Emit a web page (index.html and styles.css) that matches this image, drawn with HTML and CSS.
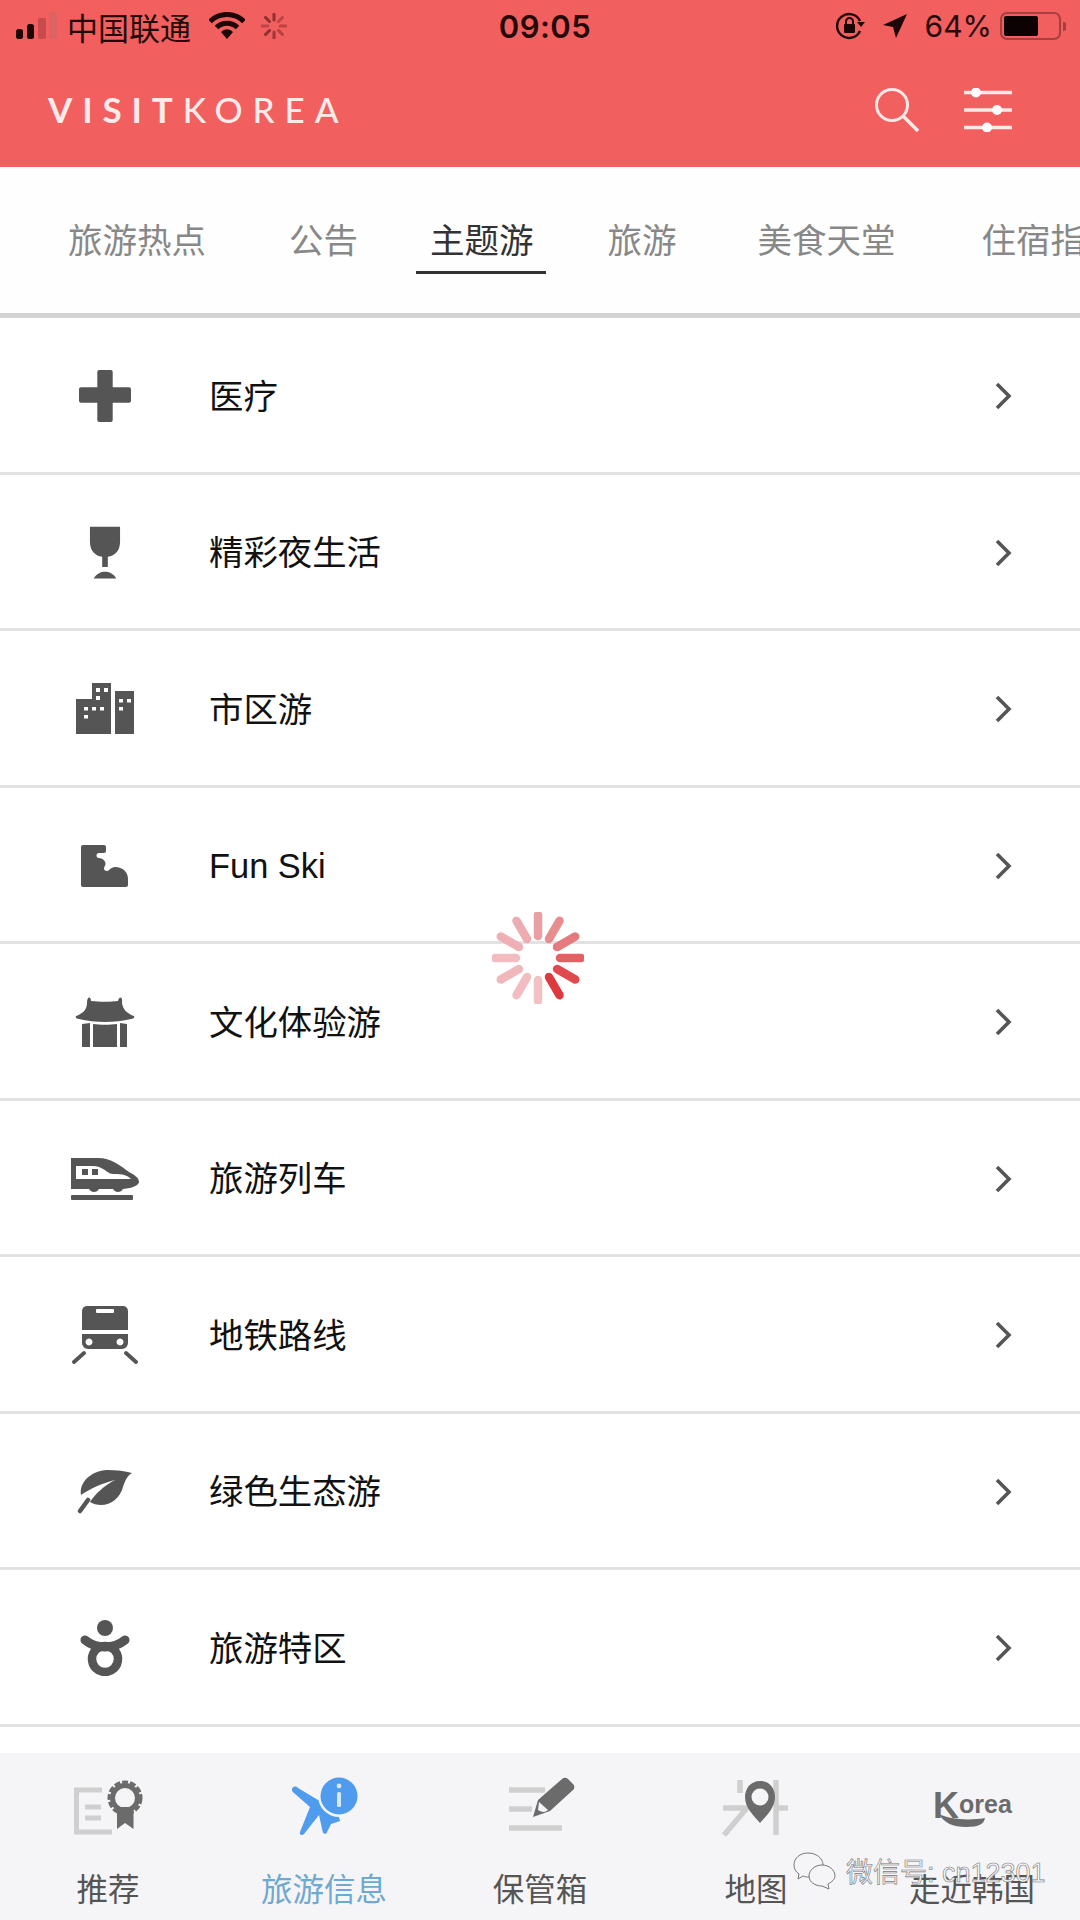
FILE: index.html
```html
<!DOCTYPE html>
<html lang="zh-CN">
<head>
    <meta charset="UTF-8">
    <meta name="viewport" content="width=device-width, initial-scale=1.0">
    <title>VISITKOREA</title>
    <link rel="stylesheet" href="styles.css">
</head>
<body>
<div class="app">

    <header class="top">
        <div class="status">
            <div class="status-left">
                <svg class="ic-signal" width="44" height="28" viewBox="0 0 44 28">
                    <rect x="0" y="17" width="7" height="10" rx="2.5" fill="#1c0606"/>
                    <rect x="11" y="12" width="7" height="15" rx="2.5" fill="#1c0606"/>
                    <rect x="22" y="6" width="8" height="21" rx="2" fill="#c94a4a"/>
                    <rect x="33" y="0" width="8" height="27" rx="2" fill="#dd6262"/>
                </svg>
                <span class="carrier">中国联通</span>
                <svg class="ic-wifi" width="36" height="28" viewBox="0 0 36 28">
                    <path d="M1 9.5 A24 24 0 0 1 35 9.5" fill="none" stroke="#1c0606" stroke-width="5"/>
                    <path d="M7.5 15.5 A15 15 0 0 1 28.500 15.5" fill="none" stroke="#1c0606" stroke-width="5"/>
                    <path d="M12 20 A8 8 0 0 1 24 20 L18 27Z" fill="#1c0606"/>
                </svg>
                <svg class="ic-load" width="26" height="26" viewBox="-13 -13 26 26">
                    <g stroke="#8c2c2c" stroke-width="3" stroke-linecap="round">
                        <path d="M0 -12V-6" opacity=".95"/>
                        <path d="M0 12V6" opacity=".8"/>
                        <path d="M-12 0H-6" opacity=".5"/>
                        <path d="M12 0H6" opacity=".5"/>
                        <path d="M-8.500 -8.500L-4.500 -4.500" opacity=".95"/>
                        <path d="M8.500 8.500L4.500 4.500" opacity=".6"/>
                        <path d="M8.500 -8.500L4.500 -4.500" opacity=".5"/>
                        <path d="M-8.500 8.500L-4.500 4.500" opacity=".95"/>
                    </g>
                </svg>
            </div>
            <div class="time">09:05</div>
            <div class="status-right">
                <svg class="ic-lock" width="30" height="28" viewBox="0 0 30 28">
                    <path d="M24 19 A12 12 0 1 1 24 9" fill="none" stroke="#1c0606" stroke-width="2.400"/>
                    <path d="M21 10 H29 L25 15Z" fill="#1c0606"/>
                    <rect x="8" y="12" width="11" height="9" rx="1" fill="#1c0606"/>
                    <path d="M10 12 V9.500 A3.500 3.500 0 0 1 17 9.500 V12" fill="none" stroke="#1c0606" stroke-width="2"/>
                </svg>
                <svg class="ic-loc" width="26" height="26" viewBox="0 0 26 26">
                    <path d="M25 1 L14 25 L11 14 L1 12Z" fill="#1c0606"/>
                </svg>
                <span class="battery-text">64%</span>
                <div class="battery"><div class="battery-fill"></div></div>
                <div class="battery-tip"></div>
            </div>
        </div>
        <div class="brand-bar">
            <div class="brand"><b>VISIT</b>KOREA</div>
            <div class="brand-tools">
                <svg width="46" height="46" viewBox="0 0 46 46">
                    <circle cx="18" cy="18" r="15.500" fill="none" stroke="#fde8e8" stroke-width="3"/>
                    <path d="M29 29 L44 44" stroke="#fde8e8" stroke-width="3.500"/>
                </svg>
                <svg width="48" height="44" viewBox="0 0 48 44">
                    <g stroke="#fde8e8" stroke-width="3.500">
                        <path d="M0 4.500H48"/>
                        <path d="M0 22H48"/>
                        <path d="M0 39.500H48"/>
                    </g>
                    <g fill="#fff">
                        <circle cx="12" cy="4.500" r="5"/>
                        <circle cx="33" cy="22" r="5"/>
                        <circle cx="23" cy="39.500" r="5"/>
                    </g>
                </svg>
            </div>
        </div>
    </header>

    <nav class="tabs">
        <span class="tab">旅游热点</span>
        <span class="tab">公告</span>
        <span class="tab active">主题游</span>
        <span class="tab">旅游</span>
        <span class="tab">美食天堂</span>
        <span class="tab">住宿指南</span>
    </nav>

    <div class="list">
        <div class="row">
            <div class="row-icon">
                <svg width="52" height="52" viewBox="0 0 54 54"><path d="M19 2 a2 2 0 0 1 2 -2 h12 a2 2 0 0 1 2 2 v16 h17 a2 2 0 0 1 2 2 v12 a2 2 0 0 1 -2 2 h-17 v18 a2 2 0 0 1 -2 2 h-12 a2 2 0 0 1 -2 -2 v-18 h-17 a2 2 0 0 1 -2 -2 v-12 a2 2 0 0 1 2 -2 h17z" fill="#555"/></svg>
            </div>
            <span class="row-label">医疗</span>
            <svg class="chev" width="20" height="28" viewBox="0 0 20 28"><path d="M3 2 L15 14 L3 26" fill="none" stroke="#555" stroke-width="3.600"/></svg>
        </div>
        <div class="row">
            <div class="row-icon">
                <svg width="32" height="54" viewBox="0 0 34 56"><path d="M1 0 H33 V16 C33 26 27 31 20 32 V43 H14 V32 C7 31 1 26 1 16Z" fill="#555"/><path d="M5 55 C8 50 13 48 17 48 C21 48 26 50 29 55Z" fill="#555"/></svg>
            </div>
            <span class="row-label">精彩夜生活</span>
            <svg class="chev" width="20" height="28" viewBox="0 0 20 28"><path d="M3 2 L15 14 L3 26" fill="none" stroke="#555" stroke-width="3.600"/></svg>
        </div>
        <div class="row">
            <div class="row-icon">
                <svg width="58" height="52" viewBox="0 0 58 52">
                    <path d="M0 16 H16 V0 H35 V51 H0Z M39 8 H58 V51 H39Z" fill="#555"/>
                    <g fill="#fff">
                        <rect x="20" y="5" width="4" height="4"/><rect x="28" y="5" width="4" height="4"/><rect x="20" y="13" width="4" height="4"/>
                        <rect x="8" y="24" width="4" height="3.500"/><rect x="16" y="24" width="4" height="3.500"/><rect x="24" y="24" width="4" height="3.500"/><rect x="8" y="32" width="4" height="3.500"/>
                        <rect x="43" y="16" width="4" height="3.500"/><rect x="51" y="16" width="4" height="3.500"/><rect x="43" y="24" width="4" height="3.500"/>
                    </g>
                </svg>
            </div>
            <span class="row-label">市区游</span>
            <svg class="chev" width="20" height="28" viewBox="0 0 20 28"><path d="M3 2 L15 14 L3 26" fill="none" stroke="#555" stroke-width="3.600"/></svg>
        </div>
        <div class="row">
            <div class="row-icon">
                <svg width="47" height="42" viewBox="0 0 47 42"><path d="M2 0 H23 a2 2 0 0 1 2 2 V6 a2 2 0 0 1 -2 2 H18 a2.500 2.500 0 0 0 0 5 C22 13 26 17 24 21 C22 23 23 26 26 26 C28 26 30 22 34 22 C42 22 47 27 47 34 V40 a2 2 0 0 1 -2 2 H2 a2 2 0 0 1 -2 -2 V2 a2 2 0 0 1 2 -2Z" fill="#555"/></svg>
            </div>
            <span class="row-label latin">Fun Ski</span>
            <svg class="chev" width="20" height="28" viewBox="0 0 20 28"><path d="M3 2 L15 14 L3 26" fill="none" stroke="#555" stroke-width="3.600"/></svg>
        </div>
        <div class="row">
            <div class="row-icon">
                <svg width="60" height="52" viewBox="0 0 60 52">
                    <path d="M12 7 C12 0 16 0 16 5 C24 6 36 6 43 5 C44 0 48 0 47 7 C48 14 53 18 59 20 C60 22 58 23 56 23 C40 27 20 27 4 23 C2 23 0 22 1 20 C7 18 12 14 12 7Z" fill="#555"/>
                    <path d="M7 28 L15 27 V51 H7Z M18 28 C25 29 35 29 42 28 V51 H18Z M45 27 L52 28 V51 H45Z" fill="#555"/>
                </svg>
            </div>
            <span class="row-label">文化体验游</span>
            <svg class="chev" width="20" height="28" viewBox="0 0 20 28"><path d="M3 2 L15 14 L3 26" fill="none" stroke="#555" stroke-width="3.600"/></svg>
        </div>
        <div class="row">
            <div class="row-icon">
                <svg width="68" height="42" viewBox="0 0 68 42">
                    <path fill-rule="evenodd" d="M0 0 H27 C40 0 50 8 58 14 C64 17 68 20 68 24 C68 27 62 30 52 31 C50 35 44 35 42 31 H28 C26 35 20 35 18 31 H0Z M5 8 V21 H60 C56 17 52 16 42 16 C38 16 36 13 32 11 C29 9 26 8 22 8Z" fill="#555"/>
                    <rect x="11" y="11" width="6" height="6" fill="#555"/><rect x="21" y="11" width="6" height="6" fill="#555"/>
                    <rect x="0" y="37" width="62" height="5" rx="1" fill="#555"/>
                </svg>
            </div>
            <span class="row-label">旅游列车</span>
            <svg class="chev" width="20" height="28" viewBox="0 0 20 28"><path d="M3 2 L15 14 L3 26" fill="none" stroke="#555" stroke-width="3.600"/></svg>
        </div>
        <div class="row">
            <div class="row-icon">
                <svg width="66" height="58" viewBox="0 0 66 58">
                    <path d="M10 5 a5 5 0 0 1 5 -5 H51 a5 5 0 0 1 5 5 V24 H10Z" fill="#555"/>
                    <rect x="24" y="3" width="18" height="4" rx="1" fill="#fff"/>
                    <path fill-rule="evenodd" d="M10 28 H56 V37 a6 6 0 0 1 -6 6 H16 a6 6 0 0 1 -6 -6Z M17 32.500 a3.500 3.500 0 1 0 .01 0Z M48 32.500 a3.500 3.500 0 1 0 .01 0Z" fill="#555"/>
                    <path d="M12 47 L2 56 M54 47 L64 56" stroke="#555" stroke-width="3.800" stroke-linecap="round"/>
                </svg>
            </div>
            <span class="row-label">地铁路线</span>
            <svg class="chev" width="20" height="28" viewBox="0 0 20 28"><path d="M3 2 L15 14 L3 26" fill="none" stroke="#555" stroke-width="3.600"/></svg>
        </div>
        <div class="row">
            <div class="row-icon">
                <svg width="56" height="44" viewBox="0 0 56 44">
                    <path d="M4 25 C2 12 14 1 30 0 C40 0 48 1 55 3 C51 5 48 10 46 17 C43 28 34 35 24 35 C20 35 16 34 13 32 C18 24 28 15 38 10 C26 13 14 18 4 25Z" fill="#555"/>
                    <path d="M3 41 L11 30" stroke="#555" stroke-width="4.500" stroke-linecap="round"/>
                </svg>
            </div>
            <span class="row-label">绿色生态游</span>
            <svg class="chev" width="20" height="28" viewBox="0 0 20 28"><path d="M3 2 L15 14 L3 26" fill="none" stroke="#555" stroke-width="3.600"/></svg>
        </div>
        <div class="row">
            <div class="row-icon">
                <svg width="52" height="56" viewBox="0 0 52 56">
                    <circle cx="26" cy="8" r="8" fill="#555"/>
                    <path d="M6 20 C12 25 18 27 26 27 C34 27 40 25 46 20" fill="none" stroke="#555" stroke-width="9" stroke-linecap="round"/>
                    <circle cx="26" cy="39" r="13" fill="none" stroke="#555" stroke-width="8.500"/>
                </svg>
            </div>
            <span class="row-label">旅游特区</span>
            <svg class="chev" width="20" height="28" viewBox="0 0 20 28"><path d="M3 2 L15 14 L3 26" fill="none" stroke="#555" stroke-width="3.600"/></svg>
        </div>
    </div>

    <!-- spinner over the list -->
    <svg class="spinner" width="92" height="92" viewBox="-46 -46 92 92">
        <g stroke-width="8.500" stroke-linecap="round">
            <path d="M0 -43 V-22" stroke="#e9a0a4"/>
            <path d="M0 -43 V-22" stroke="#e98c90" transform="rotate(30)"/>
            <path d="M0 -43 V-22" stroke="#e47a7e" transform="rotate(60)"/>
            <path d="M0 -43 V-22" stroke="#e55f63" transform="rotate(90)"/>
            <path d="M0 -43 V-22" stroke="#e0494d" transform="rotate(120)"/>
            <path d="M0 -43 V-22" stroke="#dc3a3e" transform="rotate(150)"/>
            <path d="M0 -43 V-22" stroke="#f3c0c3" transform="rotate(180)"/>
            <path d="M0 -43 V-22" stroke="#f2bcc0" transform="rotate(210)"/>
            <path d="M0 -43 V-22" stroke="#f0b8bb" transform="rotate(240)"/>
            <path d="M0 -43 V-22" stroke="#f2bcc0" transform="rotate(270)"/>
            <path d="M0 -43 V-22" stroke="#eeb0b4" transform="rotate(300)"/>
            <path d="M0 -43 V-22" stroke="#edacb0" transform="rotate(330)"/>
        </g>
    </svg>

    <footer class="tabbar">
        <div class="tabbar-item">
            <svg width="72" height="60" viewBox="0 0 72 60">
                <path d="M30 13 H4.500 V55 H40 M13 30 H29 M13 41 H29" fill="none" stroke="#cfcfcf" stroke-width="5"/>
                <path d="M45 30 V52 L53 46 L61.500 52 V30Z" fill="#6b6b6b"/>
                <circle cx="53" cy="21" r="16" fill="none" stroke="#6b6b6b" stroke-width="3" stroke-dasharray="6 2"/>
                <circle cx="53" cy="21" r="12.500" fill="none" stroke="#6b6b6b" stroke-width="5"/>
            </svg>
            <span class="tabbar-label">推荐</span>
        </div>
        <div class="tabbar-item blue">
            <svg width="72" height="60" viewBox="0 0 72 60">
                <path d="M4 12 C5 9 8 9 10 11 L30 23 L42 14 L50 36 L52 44 L43 47 L38 57 L35 56 L31 38 L16 57 C14 59 11 58 12 55 L22 30 L6 16 C4 15 4 13 4 12Z" fill="#4f9bee"/>
                <circle cx="51" cy="19" r="21" fill="#f5f5f7"/>
                <circle cx="51" cy="19" r="18.500" fill="#4f9bee"/>
                <rect x="49" y="15" width="4" height="15" rx="1.500" fill="#d8e8fa"/>
                <circle cx="51" cy="9" r="2.400" fill="#d8e8fa"/>
            </svg>
            <span class="tabbar-label">旅游信息</span>
        </div>
        <div class="tabbar-item">
            <svg width="64" height="56" viewBox="0 0 64 56">
                <path d="M1 13 H37 M1 32 H24 M1 51 H54" stroke="#cfcfcf" stroke-width="5.500"/>
                <path d="M54 2 a4 4 0 0 1 6 0 L65 7 a4 4 0 0 1 0 6 L42 34 L25 40 L30 23Z" fill="#6b6b6b"/>
                <path d="M31 25 L40 33 C37 36 33 35 30 33Z" fill="#f5f5f7"/>
            </svg>
            <span class="tabbar-label">保管箱</span>
        </div>
        <div class="tabbar-item">
            <svg width="80" height="60" viewBox="0 0 80 60">
                <path d="M24 3 V16 M60 3 V58 M7 31 H31 L8 58 M62 31 H72" fill="none" stroke="#cfcfcf" stroke-width="5.500"/>
                <path d="M44 4 C54 4 59 12 59 20 C59 31 50 39 44 46 C38 39 29 31 29 20 C29 12 34 4 44 4Z" fill="#6b6b6b"/>
                <circle cx="44" cy="20" r="8.500" fill="#f5f5f7"/>
            </svg>
            <span class="tabbar-label">地图</span>
        </div>
        <div class="tabbar-item">
            <div class="korea-logo">
                <span class="korea-k">K</span><span class="korea-rest">orea</span>
                <svg class="korea-swoosh" width="46" height="13" viewBox="0 0 46 13"><path d="M0 0 C10 5 28 7 46 4 C45 10 40 13 27 13 C14 13 5 9 0 0Z" fill="#6b6b6b"/></svg>
            </div>
            <span class="tabbar-label">走近韩国</span>
        </div>
    </footer>

    <!-- watermark on top of the tab bar -->
    <div class="watermark">
        <svg width="44" height="38" viewBox="0 0 44 38">
            <g fill="#f5f5f7" stroke="#777" stroke-width="1">
                <path d="M15 1 C7 1 1 6 1 13 C1 17 3 20 6 22 L5 27 L10 24 C12 25 14 25 16 25 C24 25 30 20 30 13 C30 6 23 1 15 1Z"/>
                <path d="M29 13 C22 13 16 18 16 24 C16 30 22 34 29 34 L36 37 L35 32 C39 30 42 27 42 24 C42 18 36 13 29 13Z"/>
            </g>
        </svg>
        <span>微信号: cn12301</span>
    </div>

</div>
</body>
</html>
```

FILE: styles.css
```css
* {
    box-sizing: border-box;
}
body {
    margin: 0;
    background-color: #fff;
    font-family: "Liberation Sans", "Noto Sans CJK SC", sans-serif;
}
.app {
    position: relative;
    width: 1080px;
    height: 1920px;
    overflow: hidden;
    background-color: #fff;
    display: flex;
    flex-direction: column;
}

/* Header */
.top {
    height: 167px;
    background-color: #f25f5f;
    flex: none;
}
.status {
    height: 52px;
    padding: 0 14px 0 16px;
    display: grid;
    grid-template-columns: 1fr auto 1fr;
    align-items: center;
    color: #240808;
}
.status-left, .status-right {
    display: flex;
    align-items: center;
}
.status-right {
    justify-content: flex-end;
}
.carrier {
    font-size: 31px;
    margin-left: 7px;
}
.ic-wifi {
    margin-left: 18px;
}
.ic-load {
    margin-left: 16px;
}
.time {
    font-size: 31px;
    letter-spacing: 0.5px;
    font-family: "Inter", "Liberation Sans", sans-serif;
    font-weight: 600;
    margin-left: 8px;
}
.ic-loc {
    margin-left: 16px;
}
.battery-text {
    font-size: 30px;
    margin-left: 17px;
    font-family: "Inter", "Liberation Sans", sans-serif;
}
.battery {
    width: 61px;
    height: 28px;
    margin-left: 8px;
    border: 2px solid #a83e3e;
    border-radius: 7px;
    padding: 2px;
}
.battery-fill {
    width: 34px;
    height: 100%;
    border-radius: 2px;
    background-color: #0c0202;
}
.battery-tip {
    width: 3px;
    height: 9px;
    margin-left: 2px;
    background-color: #a83e3e;
    border-radius: 0 2px 2px 0;
}
.brand-bar {
    height: 115px;
    padding: 0 68px 0 48px;
    display: flex;
    align-items: center;
    justify-content: space-between;
}
.brand {
    color: #fdeaea;
    font-family: "Lato", sans-serif;
    font-size: 35px;
    font-weight: 500;
    letter-spacing: 9.900px;
    line-height: 1;
}
.brand b {
    font-weight: 700;
}
.brand-tools {
    display: flex;
    align-items: center;
    gap: 44px;
}

/* Tabs */
.tabs {
    height: 151px;
    flex: none;
    display: flex;
    align-items: flex-start;
    padding: 49px 0 0 68px;
    border-bottom: 5px solid #d4d4d4;
    white-space: nowrap;
    overflow: hidden;
    background-color: #fefefe;
}
.tab {
    font-size: 34.500px;
    line-height: 50px;
    color: #888;
    margin-right: 83px;
    flex: none;
}
.tab:nth-child(2) {
    margin-right: 72px;
}
.tab:nth-child(3) {
    margin-right: 74px;
    position: relative;
    color: #333;
}
.tab:nth-child(4) {
    margin-right: 81px;
}
.tab:nth-child(5) {
    margin-right: 86px;
}
.tab.active::after {
    content: "";
    position: absolute;
    left: -14px;
    right: -12px;
    top: 55px;
    height: 3px;
    background-color: #333;
}

/* List */
.list {
    flex: 1;
    min-height: 0;
}
.row {
    height: 156.500px;
    display: flex;
    align-items: center;
    border-bottom: 3px solid #e2e2e4;
    padding: 0 66px 0 0;
}
.row-icon {
    width: 209px;
    margin-top: 3px;
    display: flex;
    justify-content: center;
    flex: none;
}
.row-icon svg {
    display: block;
}
.row-label {
    flex: 1;
    font-size: 34.400px;
    color: #111;
    margin-top: -2px;
}
.row-label.latin {
    padding-top: 6px;
}
.chev {
    margin-top: 3px;
}
.spinner {
    position: absolute;
    left: 492px;
    top: 912px;
}

/* Bottom bar */
.tabbar {
    height: 167px;
    flex: none;
    display: grid;
    grid-template-columns: repeat(5, 216px);
    background-color: #f5f5f7;
}
.tabbar-item {
    display: flex;
    flex-direction: column;
    align-items: center;
    position: relative;
    padding-top: 24px;
}
.tabbar-item svg {
    display: block;
    overflow: visible;
}
.tabbar-label {
    position: absolute;
    top: 117px;
    font-size: 31.500px;
    line-height: 40px;
    color: #555;
    white-space: nowrap;
}
.blue .tabbar-label {
    color: #6fa8d0;
}
.korea-logo {
    position: relative;
    width: 78px;
    height: 36px;
    margin-top: 13px;
    color: #6b6b6b;
    font-family: "Liberation Sans", sans-serif;
    font-weight: bold;
    line-height: 1;
}
.korea-k {
    position: absolute;
    left: 0;
    top: -2px;
    font-size: 36px;
}
.korea-rest {
    position: absolute;
    left: 26px;
    top: 2px;
    font-size: 25px;
}
.korea-swoosh {
    position: absolute;
    left: 6px;
    top: 24px;
}
.watermark {
    position: absolute;
    left: 793px;
    top: 1851px;
    display: flex;
    align-items: center;
    gap: 9px;
    font-size: 27px;
    color: #f5f5f7;
    -webkit-text-stroke: 0.6px #777;
}
```
